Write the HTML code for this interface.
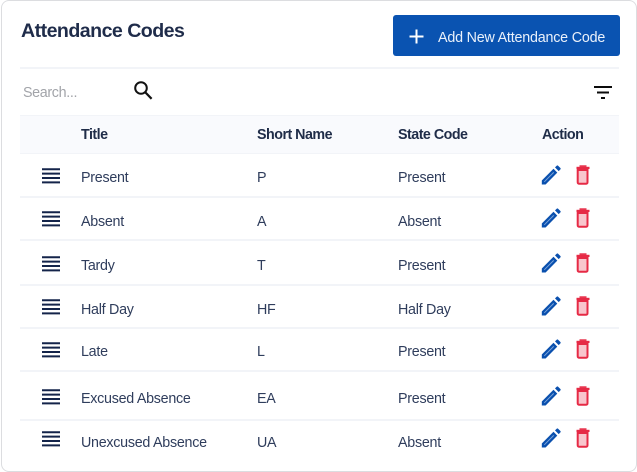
<!DOCTYPE html>
<html><head><meta charset="utf-8"><style>
html,body{margin:0;padding:0;background:#fff}
#p{position:relative;width:637px;height:472px;overflow:hidden;background:#fff;font-family:"Liberation Sans",sans-serif;color:#2b3a5a;filter:blur(.3px)}
#card{position:absolute;left:1px;top:0;width:634px;height:470px;border:1px solid #dcdde0;border-radius:8px;box-sizing:content-box}
.a{position:absolute;white-space:nowrap}
.l{position:absolute;left:20px;width:599px;height:1.5px;background:#f2f4f8}
.t{font-size:14.3px;letter-spacing:-.27px;line-height:18px;color:#2f3d5c;margin-top:1px}
.h{font-size:14.3px;font-weight:bold;letter-spacing:-.52px;line-height:18px;top:126px;color:#1f2c48}
svg{position:absolute;overflow:visible}
</style></head><body><div id="p">
<div id="card"></div>
<div class="a" style="left:21px;top:18px;font-size:19.6px;font-weight:bold;letter-spacing:-.54px;line-height:26px;color:#1f2c4a">Attendance Codes</div>
<div class="a" style="left:393px;top:15px;width:227px;height:41px;background:#0a53b1;border-radius:3px"></div>
<svg style="left:409px;top:29px" width="15" height="15"><path d="M7.5 0.5v14M0.5 7.5h14" stroke="#fff" stroke-width="2" fill="none"/></svg>
<div class="a" style="left:438px;top:29px;font-size:14.3px;line-height:18px;color:#eaf1fb;letter-spacing:-.2px">Add New Attendance Code</div>
<div class="l" style="top:67px"></div>
<div class="a" style="left:23px;top:84px;font-size:14.3px;line-height:18px;color:#a2a4a9;letter-spacing:-.35px">Search...</div>
<svg style="left:134px;top:81px" width="19" height="19"><circle cx="7" cy="7" r="5.8" stroke="#111" stroke-width="2" fill="none"/><path d="M11 11l6.6 6.8" stroke="#111" stroke-width="2.2"/></svg>
<svg style="left:594px;top:86px" width="18" height="13"><path d="M0 1h18M3 6.5h12M7 12h4" stroke="#0c0c0c" stroke-width="2" fill="none"/></svg>
<div class="a" style="left:20px;top:115px;width:599px;height:39px;background:#f9fafd;border-top:1.5px solid #f2f4f8;border-bottom:1.5px solid #f2f4f8;box-sizing:border-box"></div>
<div class="a h" style="left:81px">Title</div>
<div class="a h" style="left:257px">Short Name</div>
<div class="a h" style="left:398px">State Code</div>
<div class="a h" style="left:542px">Action</div>

<div class="l" style="top:196px"></div><div class="l" style="top:239px"></div><div class="l" style="top:284px"></div><div class="l" style="top:327px"></div><div class="l" style="top:370px"></div><div class="l" style="top:419px"></div>

<svg width="0" height="0" style="position:absolute"><defs>
<g id="m"><path d="M0 1.3h18M0 5.6h18M0 10h18M0 14.4h18" stroke="#14244a" stroke-width="2" fill="none"/></g>
<g id="e"><path d="M0.8 19.5v-4L12.5 3.8l3.8 3.8L4.6 19.5z" fill="#0a50ae"/><path d="M3.3 16.8l9.4-9.4" stroke="#7ba4da" stroke-width="1"/><path d="M14 2.4l1.7-1.7c.5-.4 1-.4 1.4 0l2.3 2.3c.4.4.4 1 0 1.4L17.7 6.1z" fill="#0a50ae"/></g>
<g id="d"><path d="M2.7 5h9.8v12.2c0 1-.7 1.6-1.6 1.6H4.3c-.9 0-1.6-.6-1.6-1.6z" fill="#f8c6cd" stroke="#e62a45" stroke-width="2"/><path d="M1.5 1.8h13v2.2h-13z" fill="#e62a45"/><path d="M4.5 0.3h7v1.6h-7z" fill="#e62a45"/></g>
</defs></svg>

<div class="a t" style="left:81px;top:168px">Present</div><div class="a t" style="left:257px;top:168px">P</div><div class="a t" style="left:398px;top:168px">Present</div>
<svg style="left:42px;top:168px" width="18" height="16"><use href="#m"/></svg>
<svg style="left:541px;top:165px" width="21" height="21"><use href="#e"/></svg>
<svg style="left:575px;top:165px" width="15" height="20"><use href="#d"/></svg>

<div class="a t" style="left:81px;top:212px">Absent</div><div class="a t" style="left:257px;top:212px">A</div><div class="a t" style="left:398px;top:212px">Absent</div>
<svg style="left:42px;top:211px" width="18" height="16"><use href="#m"/></svg>
<svg style="left:541px;top:208px" width="21" height="21"><use href="#e"/></svg>
<svg style="left:575px;top:208px" width="15" height="20"><use href="#d"/></svg>

<div class="a t" style="left:81px;top:256px">Tardy</div><div class="a t" style="left:257px;top:256px">T</div><div class="a t" style="left:398px;top:256px">Present</div>
<svg style="left:42px;top:256px" width="18" height="16"><use href="#m"/></svg>
<svg style="left:541px;top:253px" width="21" height="21"><use href="#e"/></svg>
<svg style="left:575px;top:253px" width="15" height="20"><use href="#d"/></svg>

<div class="a t" style="left:81px;top:300px">Half Day</div><div class="a t" style="left:257px;top:300px">HF</div><div class="a t" style="left:398px;top:300px">Half Day</div>
<svg style="left:42px;top:299px" width="18" height="16"><use href="#m"/></svg>
<svg style="left:541px;top:296px" width="21" height="21"><use href="#e"/></svg>
<svg style="left:575px;top:296px" width="15" height="20"><use href="#d"/></svg>

<div class="a t" style="left:81px;top:342px">Late</div><div class="a t" style="left:257px;top:342px">L</div><div class="a t" style="left:398px;top:342px">Present</div>
<svg style="left:42px;top:342px" width="18" height="16"><use href="#m"/></svg>
<svg style="left:541px;top:339px" width="21" height="21"><use href="#e"/></svg>
<svg style="left:575px;top:339px" width="15" height="20"><use href="#d"/></svg>

<div class="a t" style="left:81px;top:389px">Excused Absence</div><div class="a t" style="left:257px;top:389px">EA</div><div class="a t" style="left:398px;top:389px">Present</div>
<svg style="left:42px;top:389px" width="18" height="16"><use href="#m"/></svg>
<svg style="left:541px;top:386px" width="21" height="21"><use href="#e"/></svg>
<svg style="left:575px;top:386px" width="15" height="20"><use href="#d"/></svg>

<div class="a t" style="left:81px;top:433px">Unexcused Absence</div><div class="a t" style="left:257px;top:433px">UA</div><div class="a t" style="left:398px;top:433px">Absent</div>
<svg style="left:42px;top:431px" width="18" height="16"><use href="#m"/></svg>
<svg style="left:541px;top:428px" width="21" height="21"><use href="#e"/></svg>
<svg style="left:575px;top:428px" width="15" height="20"><use href="#d"/></svg>
</div></body></html>
